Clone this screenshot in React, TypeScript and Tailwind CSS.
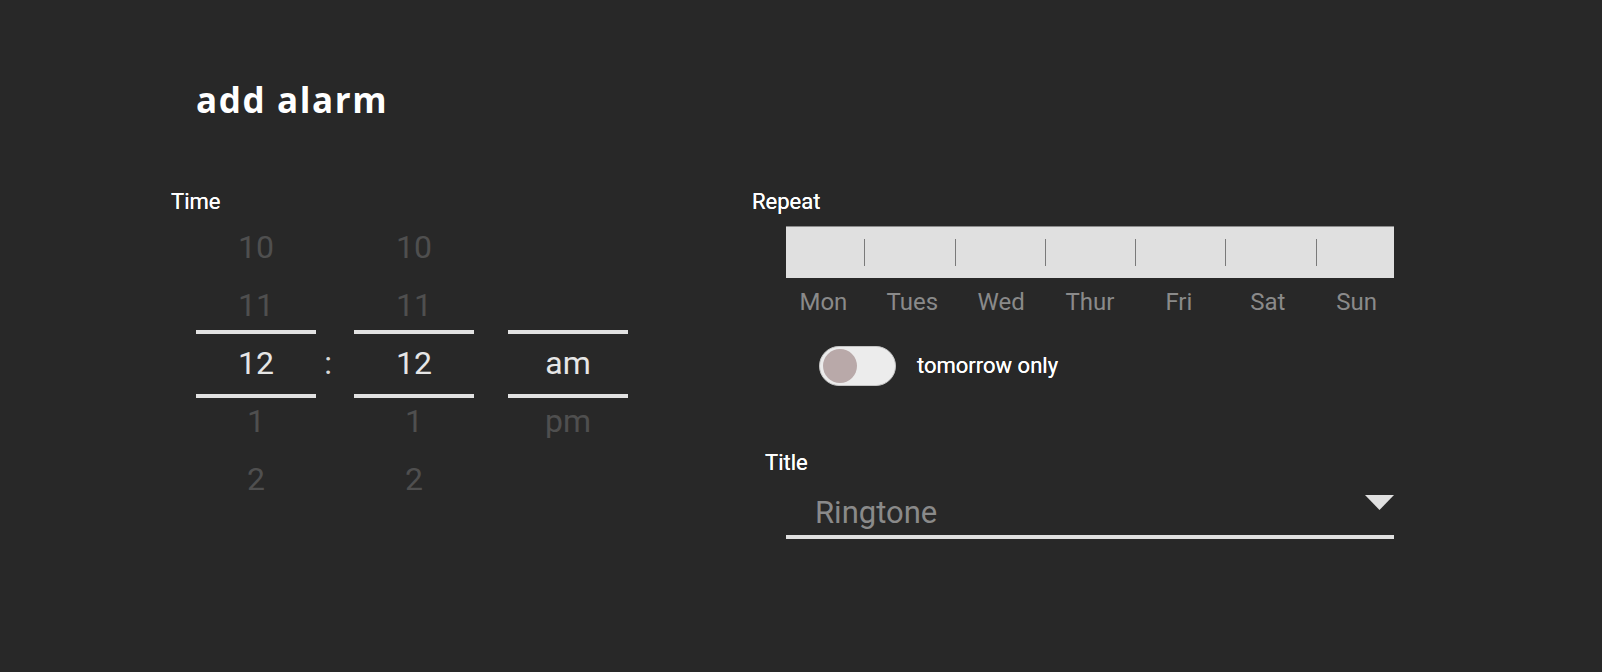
import React, { useState } from 'react';

const hours = ['10', '11', '12', '1', '2'];
const minutes = ['10', '11', '12', '1', '2'];
const periods = ['', '', 'am', 'pm', ''];
const days = ['Mon', 'Tues', 'Wed', 'Thur', 'Fri', 'Sat', 'Sun'];

const PickerColumn: React.FC<{ items: string[]; selected?: number }> = ({ items, selected = 2 }) => (
  <div className="relative w-[120px] shrink-0">
    {items.map((v, i) => (
      <div
        key={i}
        className={`h-[58px] text-center text-[32px] leading-[58px] ${i === selected ? 'text-[#e6e6e6]' : 'text-[#4f4f4f]'}`}
      >
        {v}
      </div>
    ))}
    <div className="absolute left-0 right-0 top-[112px] h-[4px] bg-[#e2e2e2]" />
    <div className="absolute left-0 right-0 top-[176px] h-[4px] bg-[#e2e2e2]" />
  </div>
);

const App: React.FC = () => {
  const [tomorrowOnly, setTomorrowOnly] = useState(false);
  const [repeat, setRepeat] = useState<string[]>([]);

  const toggleDay = (d: string) =>
    setRepeat(r => (r.includes(d) ? r.filter(x => x !== d) : [...r, d]));

  return (
    <div className="min-h-screen w-full bg-[#282828] font-['Roboto',sans-serif] pl-[171px] pt-[80px]">
      <h1 className="ml-[25px] font-['Open_Sans',sans-serif] text-[35px] leading-[40px] font-bold tracking-[1.6px] text-white">
        add alarm
      </h1>

      <div className="flex mt-[70px]">
        {/* time */}
        <section className="w-[581px] shrink-0">
          <h3 className="text-[22px] leading-[24px] text-white [text-shadow:0_0_0.4px_#fff]">Time</h3>
          <div className="flex mt-[4px] ml-[25px]">
            <PickerColumn items={hours} />
            <div className="w-[24px] shrink-0 pt-[116px] text-center text-[32px] leading-[58px] text-[#d8d8d8]">:</div>
            <div className="ml-[14px]">
              <PickerColumn items={minutes} />
            </div>
            <div className="ml-[34px]">
              <PickerColumn items={periods} />
            </div>
          </div>
        </section>

        {/* repeat + title */}
        <section className="flex flex-col">
          <h3 className="text-[22px] leading-[24px] text-white [text-shadow:0_0_0.4px_#fff]">Repeat</h3>
          <div className="ml-[34px] mt-[12px] w-[608px] h-[52px] bg-[#e0e0e0] border-t border-[#8c8c8c] flex items-center justify-center overflow-hidden">
            {days.map((d, i) => (
              <button
                key={d}
                onClick={() => toggleDay(d)}
                className={`w-[90.3px] h-full shrink-0 flex items-center ${repeat.includes(d) ? 'bg-[#c9c9c9]' : ''}`}
              >
                {i > 0 && <span className="block w-px h-[27px] bg-[#7a7a7a]" />}
              </button>
            ))}
          </div>
          <div className="ml-[27px] mt-[10px] w-[622px] flex">
            {days.map(d => (
              <span key={d} className="flex-1 text-center text-[24px] leading-[28px] text-[#8a8a8a]">
                {d}
              </span>
            ))}
          </div>

          <div className="ml-[67px] mt-[30px] flex items-center gap-[21px]">
            <button
              onClick={() => setTomorrowOnly(!tomorrowOnly)}
              className={`w-[77px] h-[40px] rounded-full bg-[#ececec] border border-[#c4c4c4] flex items-center px-[3px] ${tomorrowOnly ? 'justify-end' : 'justify-start'}`}
            >
              <span className="block w-[34px] h-[34px] rounded-full bg-[#b9a9a9]" />
            </button>
            <span className="text-[22px] leading-[24px] text-white [text-shadow:0_0_0.4px_#fff]">tomorrow only</span>
          </div>

          <h3 className="ml-[13px] mt-[65px] text-[22px] leading-[24px] text-white [text-shadow:0_0_0.4px_#fff]">Title</h3>
          <div className="ml-[34px] mt-[20px] w-[608px] flex items-start justify-between border-b-4 border-[#e0e0e0] pb-[4px]">
            <span className="pl-[29px] text-[31px] leading-[36px] text-[#8a8a8a]">Ringtone</span>
            <svg width="29" height="15" viewBox="0 0 29 15" className="shrink-0">
              <polygon points="0,0 29,0 14.5,15" fill="#e0e0e0" />
            </svg>
          </div>
        </section>
      </div>
    </div>
  );
};

export default App;
